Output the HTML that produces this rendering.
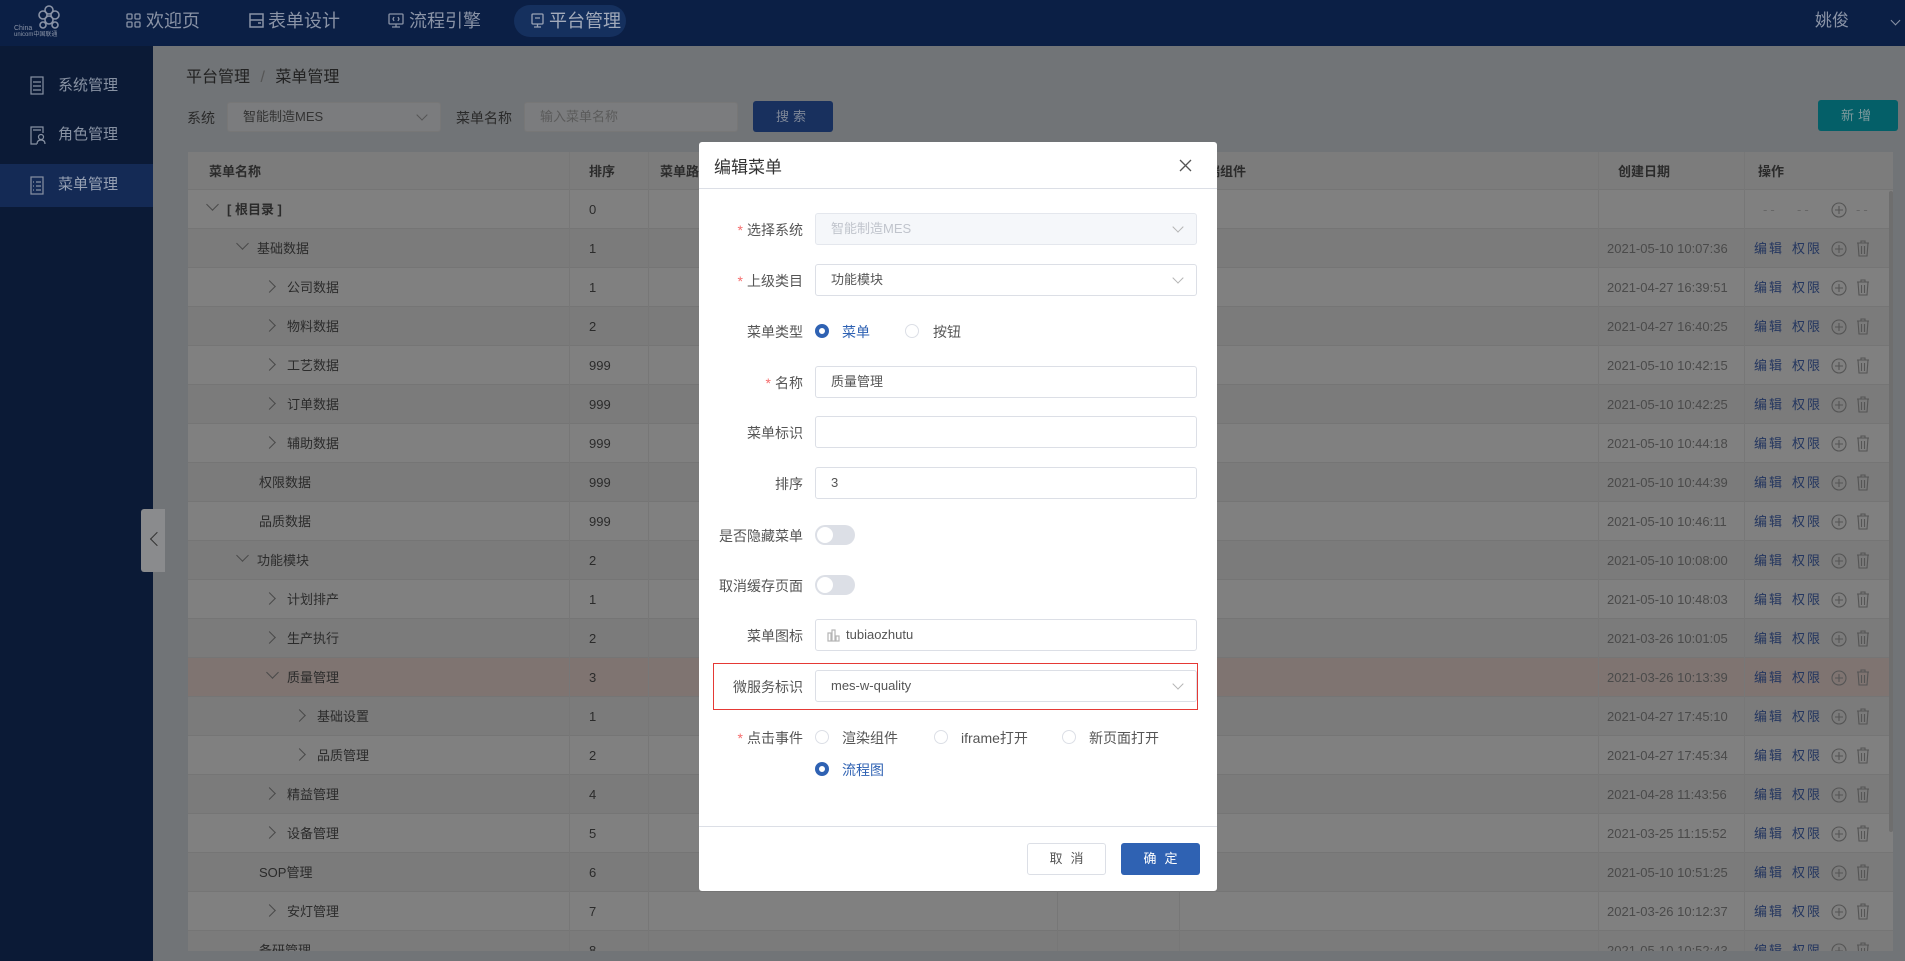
<!DOCTYPE html>
<html><head><meta charset="utf-8"><style>
*{box-sizing:border-box;margin:0;padding:0}
body{width:1905px;height:961px;overflow:hidden;position:relative;background:#717477;font-family:"Liberation Sans","Noto Sans CJK SC",sans-serif;color:#2b2b2b}
.a{position:absolute}
.hdr{left:0;top:0;width:1905px;height:46px;background:#0b1f45}
.nav{top:0;height:46px;line-height:42px;font-size:18px;color:#8a93a6}
.side{left:0;top:46px;width:153px;height:915px;background:#0b1a36}
.sitem{left:0;width:153px;height:42px;line-height:42px;font-size:15px;color:#8892a3;padding-left:58px}
.tbl{left:188px;top:152px;width:1705px;height:799px;background:#808080;overflow:hidden}
.row{position:absolute;left:0;width:1705px;height:39px;border-bottom:1px solid #757575;font-size:13px;line-height:39px}
.c{position:absolute;top:0}
.vl{position:absolute;top:0;width:1px;height:799px;background:#777}
.arr{position:absolute;top:14px;width:9px;height:9px;border-right:1.3px solid #4a4a4a;border-bottom:1.3px solid #4a4a4a}
.exp{transform:rotate(45deg);top:10px}
.col{transform:rotate(-45deg)}
.op{color:#24365f;letter-spacing:2px}
.modal{left:699px;top:142px;width:518px;height:749px;background:#fff;border-radius:3px}
.lbl{position:absolute;right:414px;font-size:14px;color:#555;text-align:right;white-space:nowrap}
.star{color:#f56c6c;margin-right:4px}
.inp{position:absolute;left:116px;width:382px;height:32px;border:1px solid #dcdfe6;border-radius:3px;font-size:13px;line-height:30px;padding-left:15px;color:#555}
.dd{position:absolute;right:14px;top:9px;width:8px;height:8px;border-right:1px solid #b5b5b5;border-bottom:1px solid #b5b5b5;transform:rotate(45deg)}
.rad{position:absolute;width:14px;height:14px;border-radius:50%;border:1px solid #dcdfe6;background:#fff}
.rad.on{border:4px solid #2f62b3;background:#fff}
.rt{position:absolute;font-size:14px;color:#555}
.sw{position:absolute;left:116px;width:40px;height:20px;border-radius:10px;background:#dcdfe6}
.sw:after{content:"";position:absolute;left:2px;top:2px;width:16px;height:16px;border-radius:50%;background:#fff}
</style></head><body>
<div class="a hdr"></div>
<svg class="a" style="left:14px;top:4px" width="58" height="34" viewBox="0 0 58 34"><g fill="none" stroke="#8a93a6" stroke-width="1.6"><circle cx="35" cy="6" r="4"/><circle cx="29" cy="11" r="4"/><circle cx="41" cy="11" r="4"/><circle cx="35" cy="16" r="4"/><circle cx="29" cy="21" r="3"/><circle cx="41" cy="21" r="3"/></g><text x="0" y="26" font-size="7" fill="#8a93a6" font-family="Liberation Sans">China</text><text x="0" y="32" font-size="6" fill="#8a93a6" font-family="Liberation Sans">unicom中国联通</text></svg>
<svg class="a" style="left:126px;top:13px" width="15" height="15"><g fill="none" stroke="#8a93a6" stroke-width="1.3"><rect x="1" y="1" width="5" height="5" rx="1"/><rect x="9" y="1" width="5" height="5" rx="1"/><rect x="1" y="9" width="5" height="5" rx="1"/><rect x="9" y="9" width="5" height="5" rx="1"/></g></svg>
<div class="a nav" style="left:146px">欢迎页</div>
<svg class="a" style="left:249px;top:13px" width="15" height="15"><g fill="none" stroke="#8a93a6" stroke-width="1.5"><rect x="1" y="1" width="13" height="13"/><path d="M1 7h13M9 10h3"/></g></svg>
<div class="a nav" style="left:268px">表单设计</div>
<svg class="a" style="left:388px;top:13px" width="16" height="15"><g fill="none" stroke="#8a93a6" stroke-width="1.3"><rect x="1" y="1" width="14" height="10" rx="1"/><path d="M8 11v3M4 14h8M6 4l-1 2 1 2M10 4l1 2-1 2"/></g></svg>
<div class="a nav" style="left:409px">流程引擎</div>
<div class="a" style="left:514px;top:5px;width:112px;height:32px;border-radius:16px;background:#15305e"></div>
<svg class="a" style="left:530px;top:13px" width="15" height="15"><g fill="none" stroke="#9aa3b5" stroke-width="1.3"><rect x="2" y="1" width="11" height="10" rx="1"/><path d="M7.5 11v3M4 14h7M5 5h5"/></g></svg>
<div class="a nav" style="left:549px;color:#a3abbb">平台管理</div>
<div class="a nav" style="left:1815px;font-size:17px">姚俊</div>
<div class="a" style="left:1892px;top:17px;width:7px;height:7px;border-right:1px solid #8a93a6;border-bottom:1px solid #8a93a6;transform:rotate(45deg)"></div>

<div class="a side"></div>
<div class="a sitem" style="top:65px">系统管理</div>
<svg class="a" style="left:30px;top:76px" width="14" height="19"><g fill="none" stroke="#8892a3" stroke-width="1.2"><rect x="1" y="1" width="12" height="17"/><path d="M3 6h8M3 10h8M3 14h8"/></g></svg>
<div class="a sitem" style="top:114px">角色管理</div>
<svg class="a" style="left:30px;top:126px" width="16" height="19"><g fill="none" stroke="#8892a3" stroke-width="1.2"><path d="M13 7V1H1v17h6M3 4h8"/><circle cx="11" cy="11" r="2.5"/><path d="M7 18c0-3 2-4 4-4s4 1 4 4"/></g></svg>
<div class="a" style="left:0;top:164px;width:153px;height:43px;background:#142a55"></div>
<div class="a sitem" style="top:164px;color:#97a1b4">菜单管理</div>
<svg class="a" style="left:30px;top:176px" width="14" height="19"><g fill="none" stroke="#8892a3" stroke-width="1.2"><rect x="1" y="1" width="12" height="17"/><path d="M3 6h1M6 6h5M3 10h1M6 10h5M3 14h1M6 14h5"/></g></svg>

<div class="a" style="left:186px;top:63px;font-size:16px;color:#222">平台管理 <span style="color:#555;margin:0 6px">/</span> 菜单管理</div>
<div class="a" style="left:187px;top:108px;font-size:14px;color:#2a2a2a">系统</div>
<div class="a" style="left:227px;top:102px;width:214px;height:30px;border:1px solid #777;border-radius:3px;background:#7b7c7e;font-size:13px;line-height:28px;padding-left:15px;color:#333">智能制造MES<div class="dd" style="top:8px;border-color:#555"></div></div>
<div class="a" style="left:456px;top:108px;font-size:14px;color:#2a2a2a">菜单名称</div>
<div class="a" style="left:524px;top:102px;width:214px;height:30px;border:1px solid #777;border-radius:3px;background:#7b7c7e;font-size:13px;line-height:28px;padding-left:15px;color:#5b5b5b">输入菜单名称</div>
<div class="a" style="left:753px;top:101px;width:80px;height:31px;border-radius:3px;background:#18305e;color:#7e8798;font-size:13px;line-height:31px;text-align:center;letter-spacing:4px">搜索</div>
<div class="a" style="left:1818px;top:100px;width:80px;height:31px;border-radius:3px;background:#045f68;color:#7e9a9d;font-size:13px;line-height:31px;text-align:center;letter-spacing:4px">新增</div>

<div class="a tbl">
<div class="row" style="top:0;height:38px;background:#7c7c7c;font-weight:bold;font-size:13px">
<span class="c" style="left:21px">菜单名称</span><span class="c" style="left:401px">排序</span><span class="c" style="left:472px">菜单路径</span><span class="c" style="left:1006px">前端组件</span><span class="c" style="left:1430px">创建日期</span><span class="c" style="left:1570px">操作</span></div>
<div id="rows"></div>
<div class="vl" style="left:381px"></div><div class="vl" style="left:460px"></div><div class="vl" style="left:869px"></div><div class="vl" style="left:991px"></div><div class="vl" style="left:1410px"></div><div class="vl" style="left:1556px"></div>
<div class="a" style="left:1701px;top:39px;width:4px;height:641px;background:#6e6e6e;border-radius:2px"></div>
</div>
<div class="a" style="left:141px;top:509px;width:24px;height:63px;background:#8a8b8d;border-radius:3px 0 0 3px"></div>
<div class="a" style="left:152px;top:534px;width:10px;height:10px;border-left:1.5px solid #333;border-bottom:1.5px solid #333;transform:rotate(45deg)"></div>

<div class="a modal">
<div class="a" style="left:15px;top:11px;font-size:17px;color:#333">编辑菜单</div>
<svg class="a" style="left:480px;top:17px" width="13" height="13"><path d="M1 1L12 12M12 1L1 12" stroke="#555" stroke-width="1.3"/></svg>
<div class="a" style="left:0;top:46px;width:518px;height:1px;background:#dcdfe6"></div>

<div class="lbl" style="top:78px"><span class="star">*</span>选择系统</div>
<div class="inp" style="top:71px;background:#f5f7fa;color:#c0c4cc;border-color:#e4e7ed">智能制造MES<div class="dd"></div></div>
<div class="lbl" style="top:129px"><span class="star">*</span>上级类目</div>
<div class="inp" style="top:122px">功能模块<div class="dd"></div></div>
<div class="lbl" style="top:180px">菜单类型</div>
<div class="rad on" style="left:116px;top:182px"></div><div class="rt" style="left:143px;top:180px;color:#2f62b3">菜单</div>
<div class="rad" style="left:206px;top:182px"></div><div class="rt" style="left:234px;top:180px">按钮</div>
<div class="lbl" style="top:231px"><span class="star">*</span>名称</div>
<div class="inp" style="top:224px">质量管理</div>
<div class="lbl" style="top:281px">菜单标识</div>
<div class="inp" style="top:274px"></div>
<div class="lbl" style="top:332px">排序</div>
<div class="inp" style="top:325px">3</div>
<div class="lbl" style="top:384px">是否隐藏菜单</div>
<div class="sw" style="top:383px"></div>
<div class="lbl" style="top:434px">取消缓存页面</div>
<div class="sw" style="top:433px"></div>
<div class="lbl" style="top:484px">菜单图标</div>
<div class="inp" style="top:477px;padding-left:30px">tubiaozhutu<svg style="position:absolute;left:11px;top:9px" width="13" height="13"><g fill="none" stroke="#b5b5b5" stroke-width="1.2"><rect x="1" y="4" width="3" height="8"/><rect x="5" y="1" width="3" height="11"/><rect x="9" y="7" width="3" height="5"/></g></svg></div>
<div class="a" style="left:14px;top:521px;width:485px;height:47px;border:1.5px solid #e53935"></div>
<div class="lbl" style="top:535px">微服务标识</div>
<div class="inp" style="top:528px">mes-w-quality<div class="dd"></div></div>
<div class="lbl" style="top:586px"><span class="star">*</span>点击事件</div>
<div class="rad" style="left:116px;top:588px"></div><div class="rt" style="left:143px;top:586px">渲染组件</div>
<div class="rad" style="left:235px;top:588px"></div><div class="rt" style="left:262px;top:586px">iframe打开</div>
<div class="rad" style="left:363px;top:588px"></div><div class="rt" style="left:390px;top:586px">新页面打开</div>
<div class="rad on" style="left:116px;top:620px"></div><div class="rt" style="left:143px;top:618px;color:#2f62b3">流程图</div>
<div class="a" style="left:0;top:684px;width:518px;height:1px;background:#dcdfe6"></div>
<div class="a" style="left:328px;top:701px;width:79px;height:32px;border:1px solid #dcdfe6;border-radius:3px;font-size:13px;line-height:30px;text-align:center;color:#555;letter-spacing:8px;padding-left:8px">取消</div>
<div class="a" style="left:422px;top:701px;width:79px;height:32px;background:#2f62b3;border-radius:3px;font-size:13px;line-height:32px;text-align:center;color:#fff;letter-spacing:8px;padding-left:8px">确定</div>
</div>

<script>
var d=[["[ 根目录 ]","0",0,"e",""],["基础数据","1",1,"e","2021-05-10 10:07:36"],["公司数据","1",2,"c","2021-04-27 16:39:51"],["物料数据","2",2,"c","2021-04-27 16:40:25"],["工艺数据","999",2,"c","2021-05-10 10:42:15"],["订单数据","999",2,"c","2021-05-10 10:42:25"],["辅助数据","999",2,"c","2021-05-10 10:44:18"],["权限数据","999",1,"l","2021-05-10 10:44:39"],["品质数据","999",1,"l","2021-05-10 10:46:11"],["功能模块","2",1,"e","2021-05-10 10:08:00"],["计划排产","1",2,"c","2021-05-10 10:48:03"],["生产执行","2",2,"c","2021-03-26 10:01:05"],["质量管理","3",2,"e","2021-03-26 10:13:39"],["基础设置","1",3,"c","2021-04-27 17:45:10"],["品质管理","2",3,"c","2021-04-27 17:45:34"],["精益管理","4",2,"c","2021-04-28 11:43:56"],["设备管理","5",2,"c","2021-03-25 11:15:52"],["SOP管理","6",1,"l","2021-05-10 10:51:25"],["安灯管理","7",2,"c","2021-03-26 10:12:37"],["备研管理","8",1,"l","2021-05-10 10:52:43"]];
var h="";
d.forEach(function(r,i){var top=38+i*39;var bg=i==12?"#7f7471":(i%2?"#7b7b7b":"#808080");
var ax=20+(r[2])*30, tx=ax+19;if(r[3]=="l")tx=ax+21;
h+='<div class="row" style="top:'+top+'px;background:'+bg+'">';
if(r[3]!="l")h+='<div class="arr '+(r[3]=="e"?"exp":"col")+'" style="left:'+(r[3]=="e"?ax:ax-3)+'px"></div>';
h+='<span class="c" style="left:'+tx+'px;'+(i==0?'font-weight:bold':'')+'">'+r[0]+'</span><span class="c" style="left:401px">'+r[1]+'</span>';
if(i==0){h+='<span class="c" style="left:1575px;color:#666;letter-spacing:3px">--</span><span class="c" style="left:1609px;color:#666;letter-spacing:3px">--</span><span class="c" style="left:1668px;color:#666;letter-spacing:3px">--</span>';}
else{h+='<span class="c" style="left:1419px;color:#4a4a4a">'+r[4]+'</span><span class="c op" style="left:1566px">编辑</span><span class="c op" style="left:1604px">权限</span>';
h+='<svg class="c" style="left:1667px;top:11px" width="16" height="17"><g fill="none" stroke="#555" stroke-width="1.1"><path d="M2 3h12M6 3V1h4v2M3 3l1 13h8l1-13M6.5 6v8M9.5 6v8"/></g></svg>';}
h+='<svg class="c" style="left:1643px;top:12px" width="16" height="16"><g fill="none" stroke="#555" stroke-width="1.1"><circle cx="8" cy="8" r="7"/><path d="M8 4v8M4 8h8"/></g></svg>';
h+='</div>';});
document.getElementById("rows").innerHTML=h;
</script>
</body></html>
